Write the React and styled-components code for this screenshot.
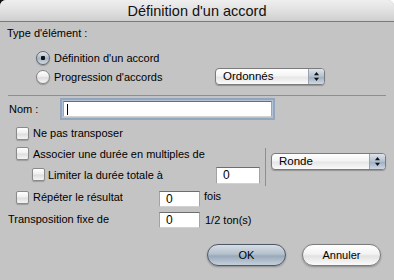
import React from "react";
import styled, { createGlobalStyle } from "styled-components";

const GlobalStyle = createGlobalStyle`
  html, body {
    margin: 0;
    padding: 0;
    background: linear-gradient(to right, #111 50%, #fff 50%);
  }
  body {
    font-family: "Liberation Sans", Arial, sans-serif;
    font-size: 11px;
    color: #000;
  }
`;

const Window = styled.div`
  width: 394px;
  height: 280px;
  background: #c4c4c4;
  border-radius: 6px 6px 0 0;
  overflow: hidden;
  display: flex;
  flex-direction: column;
`;

const TitleBar = styled.div`
  height: 21px;
  flex: 0 0 21px;
  border-bottom: 1px solid #7a7a7a;
  background: linear-gradient(#efefef, #e2e2e2 45%, #cfcfcf);
  display: flex;
  align-items: center;
  justify-content: center;
  font-size: 14.5px;
  color: #111;
`;

const Body = styled.div`
  display: flex;
  flex-direction: column;
  padding: 0 8px;
`;

const Row = styled.div`
  display: flex;
  align-items: center;
  height: ${(p) => p.$h || 18}px;
  margin-top: ${(p) => p.$mt || 0}px;
  padding-left: ${(p) => p.$pl || 0}px;
`;

const Text = styled.span`
  flex: 0 0 auto;
  width: ${(p) => (p.$w ? p.$w + "px" : "auto")};
  margin-left: ${(p) => p.$ml || 0}px;
  margin-top: ${(p) => p.$mt || 0}px;
  white-space: nowrap;
`;

const RadioList = styled.div`
  display: flex;
  flex-direction: column;
  margin-top: 4px;
  padding-left: 28px;
`;

const Radio = styled.span`
  flex: 0 0 14px;
  width: 14px;
  height: 14px;
  box-sizing: border-box;
  border-radius: 50%;
  border: 1px solid ${(p) => (p.$on ? "#5f6976" : "#858585")};
  background: ${(p) =>
    p.$on
      ? "radial-gradient(circle at 50% 50%, #111 0 2px, transparent 2.5px), linear-gradient(#e3e8ee, #a9b5c3 55%, #d2dae3)"
      : "linear-gradient(#ffffff, #ececec 50%, #dcdcdc 55%, #f6f6f6)"};
  box-shadow: 0 1px 1px rgba(0, 0, 0, 0.25);
`;

const Separator = styled.div`
  margin-top: 9px;
  height: 1px;
  background: #8e8e8e;
`;

const Check = styled.span`
  flex: 0 0 13px;
  width: 13px;
  height: 13px;
  box-sizing: border-box;
  border: 1px solid #8a8a8a;
  border-radius: 2px;
  background: linear-gradient(#ffffff, #efefef 45%, #dedede 55%, #f4f4f4);
  box-shadow: 0 1px 1px rgba(0, 0, 0, 0.2);
  margin-right: ${(p) => p.$gap || 4}px;
`;

const Field = styled.div`
  flex: 0 0 auto;
  box-sizing: border-box;
  width: ${(p) => p.$w}px;
  height: ${(p) => p.$h || 16}px;
  margin-top: ${(p) => p.$mt || 0}px;
  background: #fff;
  border: 1px solid #a3a3a3;
  border-top-color: #6d6d6d;
  border-bottom-color: #d2d2d2;
  padding-left: 6px;
  font-size: 12px;
  line-height: ${(p) => (p.$h || 16) - 2}px;
`;

const FocusField = styled(Field)`
  box-shadow: 0 0 0 1px #b4c2d3, 0 0 0 3px #93a6bf;
  display: flex;
  align-items: center;
  padding-left: 3px;
`;

const Caret = styled.span`
  width: 1px;
  height: 11px;
  background: #000;
`;

const Popup = styled.div`
  flex: 0 0 auto;
  box-sizing: border-box;
  width: ${(p) => p.$w}px;
  height: 17px;
  display: flex;
  align-items: stretch;
  border: 1px solid #7b7b7b;
  border-radius: 4px;
  overflow: hidden;
  background: linear-gradient(#ffffff, #f4f4f4 45%, #e6e6e6 55%, #fafafa);
  box-shadow: 0 1px 1px rgba(0, 0, 0, 0.25);
`;

const PopupText = styled.span`
  flex: 1;
  padding-left: 7px;
  line-height: 15px;
  font-size: 11.5px;
`;

const PopupCap = styled.span`
  flex: 0 0 15px;
  border-left: 1px solid #9aa3ae;
  background: linear-gradient(#dde4ec, #b3c0cf 50%, #9fb0c4 55%, #cfd9e4);
  display: flex;
  align-items: center;
  justify-content: center;
`;

const Group = styled.div`
  display: flex;
  margin-top: 2px;
`;

const GroupLeft = styled.div`
  flex: 0 0 257px;
  display: flex;
  flex-direction: column;
`;

const GroupRight = styled.div`
  flex: 1;
  margin-top: 4px;
  border-left: 1px solid #8e8e8e;
  padding: 5px 0 0 5px;
`;

const ButtonRow = styled.div`
  display: flex;
  justify-content: flex-end;
  gap: 16px;
  margin-top: 15px;
  padding-right: 5px;
`;

const Button = styled.div`
  box-sizing: border-box;
  width: 79px;
  height: 22px;
  border-radius: 11px;
  display: flex;
  align-items: center;
  justify-content: center;
  border: 1px solid ${(p) => (p.$primary ? "#4f5966" : "#7c7c7c")};
  background: ${(p) =>
    p.$primary
      ? "linear-gradient(#d6dde5, #b4c0cd 45%, #9aa9ba 55%, #c4d0dc)"
      : "linear-gradient(#ffffff, #f3f3f3 45%, #e2e2e2 55%, #fbfbfb)"};
  box-shadow: 0 1px 2px rgba(0, 0, 0, 0.3);
`;

function Arrows() {
  return (
    <svg width="7" height="11" viewBox="0 0 7 11">
      <path d="M3.5 1 L6 4.2 L1 4.2 Z" fill="#111" />
      <path d="M3.5 10 L6 6.8 L1 6.8 Z" fill="#111" />
    </svg>
  );
}

function Select({ width, value }) {
  return (
    <Popup $w={width}>
      <PopupText>{value}</PopupText>
      <PopupCap>
        <Arrows />
      </PopupCap>
    </Popup>
  );
}

export default function App() {
  return (
    <>
      <GlobalStyle />
      <Window>
        <TitleBar>Définition d'un accord</TitleBar>
        <Body>
          <Row $h={22}>
            <Text $ml={-1}>Type d'élément :</Text>
          </Row>
          <RadioList>
            <Row $h={19}>
              <Radio $on />
              <Text $ml={4}>Définition d'un accord</Text>
            </Row>
            <Row $h={19}>
              <Radio />
              <Text $ml={4} $w={161}>
                Progression d'accords
              </Text>
              <Select width={110} value="Ordonnés" />
            </Row>
          </RadioList>
          <Separator />
          <Row $mt={4} $pl={1}>
            <Text $w={54}>Nom :</Text>
            <FocusField $w={209}>
              <Caret />
            </FocusField>
          </Row>
          <Row $mt={6} $pl={8}>
            <Check />
            <Text>Ne pas transposer</Text>
          </Row>
          <Group>
            <GroupLeft>
              <Row $h={19} $pl={8}>
                <Check />
                <Text>Associer une durée en multiples de</Text>
              </Row>
              <Row $h={23} $pl={24}>
                <Check $gap={3} />
                <Text $w={168}>Limiter la durée totale à</Text>
                <Field $w={44} $h={17} $mt={1}>
                  0
                </Field>
              </Row>
            </GroupLeft>
            <GroupRight>
              <Select width={115} value="Ronde" />
            </GroupRight>
          </Group>
          <Row $mt={2} $pl={8}>
            <Check />
            <Text $w={126}>Répéter le résultat</Text>
            <Field $w={41} $mt={3}>
              0
            </Field>
            <Text $ml={4} $mt={-2}>
              fois
            </Text>
          </Row>
          <Row $mt={5}>
            <Text $w={151} $mt={-3}>
              Transposition fixe de
            </Text>
            <Field $w={41}>0</Field>
            <Text $ml={5}>1/2 ton(s)</Text>
          </Row>
          <ButtonRow>
            <Button $primary>OK</Button>
            <Button>Annuler</Button>
          </ButtonRow>
        </Body>
      </Window>
    </>
  );
}
